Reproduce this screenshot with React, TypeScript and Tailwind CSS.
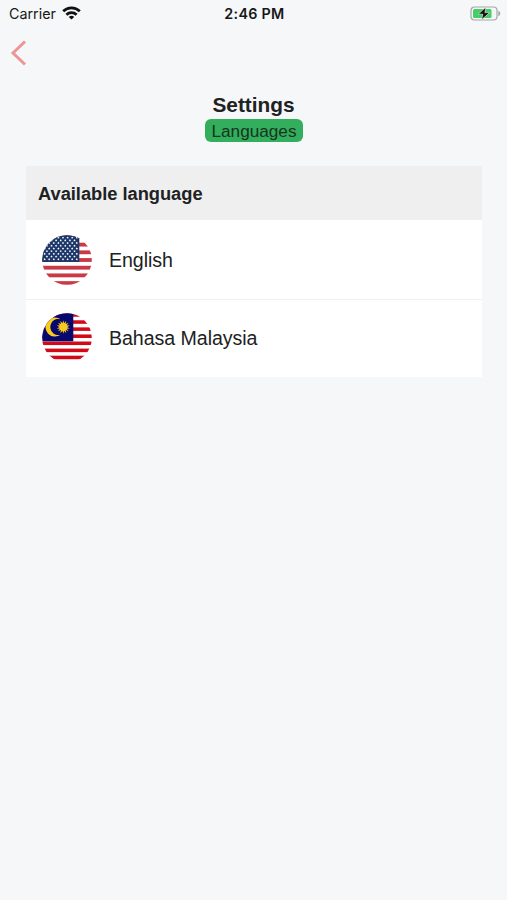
import React from 'react';

interface Language {
  id: string;
  label: string;
  flag: React.ReactNode;
}

const STRIPE = 50 / 13;

const starPoints = (cx: number, cy: number, outer: number, inner: number, count: number) =>
  Array.from({ length: count * 2 }, (_, i) => {
    const r = i % 2 === 0 ? outer : inner;
    const a = (Math.PI * i) / count - Math.PI / 2;
    return `${(cx + r * Math.cos(a)).toFixed(2)},${(cy + r * Math.sin(a)).toFixed(2)}`;
  }).join(' ');

const UsFlag = () => (
  <svg className="block h-[50px] w-[50px]" viewBox="0 0 50 50">
    <clipPath id="us-circle">
      <circle cx="25" cy="25" r="24.8" />
    </clipPath>
    <g clipPath="url(#us-circle)">
      <rect width="50" height="50" fill="#ffffff" />
      {[0, 2, 4, 6, 8, 10, 12].map(i => (
        <rect key={i} y={i * STRIPE} width="50" height={STRIPE} fill="#c93a46" />
      ))}
      <rect width="37.3" height={STRIPE * 7} fill="#1b3668" />
      {Array.from({ length: 9 }, (_, row) =>
        Array.from({ length: row % 2 === 0 ? 8 : 7 }, (_, col) => (
          <polygon
            key={`${row}-${col}`}
            points={starPoints(2.6 + col * 4.6 + (row % 2) * 2.3, 2.7 + row * 2.7, 1.25, 0.65, 5)}
            fill="#ffffff"
          />
        ))
      )}
    </g>
  </svg>
);

const MalaysiaFlag = () => (
  <svg className="mb-[2px] block h-[50px] w-[50px]" viewBox="0 0 50 50">
    <clipPath id="my-circle">
      <circle cx="25" cy="25" r="24.8" />
    </clipPath>
    <g clipPath="url(#my-circle)">
      <rect width="50" height="50" fill="#ffffff" />
      {[0, 2, 4, 6, 8, 10, 12].map(i => (
        <rect key={i} y={i * 3.54 + 0.2} width="50" height="3.54" fill="#d20a18" />
      ))}
      <rect width="31.3" height="28.3" fill="#07076e" />
      <path d="M18.6 6.2A9.6 9.6 0 1 0 18.6 21.8A8.1 8.1 0 1 1 18.6 6.2Z" fill="#f8cb1c" />
      <polygon points={starPoints(21.3, 14, 6.8, 3.8, 14)} fill="#f8cb1c" />
    </g>
  </svg>
);

const languages: Language[] = [
  { id: 'en', label: 'English', flag: <UsFlag /> },
  { id: 'ms', label: 'Bahasa Malaysia', flag: <MalaysiaFlag /> }
];

const StatusBar = () => (
  <div className="grid h-7 grid-cols-3 items-center pl-[8px] pr-[6px] font-[Inter,sans-serif] text-[#151718]">
    <div className="flex items-center gap-[6px] pl-px">
      <span className="text-[14.3px] leading-7">Carrier</span>
      <svg className="h-[14px] w-[19px] -translate-y-px" viewBox="0 0 19 14" fill="none" stroke="#111111" strokeWidth="2.7">
        <path d="M1.2 5.3C5.8 .7 13.2 .7 17.8 5.3" />
        <path d="M4.4 8.7C7.2 5.9 11.8 5.9 14.6 8.7" />
        <path d="M9.5 13.6L6.8 10.9C8.3 9.5 10.7 9.5 12.2 10.9Z" fill="#111111" stroke="none" />
      </svg>
    </div>
    <span className="text-center text-[14.3px] font-semibold leading-7 tracking-[0.3px]">2:46 PM</span>
    <svg className="h-[15px] w-[31px] -translate-y-px justify-self-end" viewBox="0 0 31 15">
      <rect x="1" y="1" width="26" height="13" rx="3.5" fill="#f5f7f9" stroke="#a4a7a8" strokeWidth="1.2" />
      <rect x="3" y="3" width="18.5" height="9" rx="1.5" fill="#45cf63" />
      <path d="M28.3 4.8V10.2C31 9.2 31 5.8 28.3 4.8Z" fill="#a4a7a8" />
      <path d="M15.8 1.2L8.2 8.2H12.8L11.6 13.8L19.6 6.6H14.9Z" fill="#111111" stroke="#f5f7f9" strokeWidth="0.6" />
    </svg>
  </div>
);

export default function App() {
  return (
    <div className="min-h-screen bg-[#f5f7f9] font-['Liberation_Sans',Arial,sans-serif] text-[#202122]">
      <StatusBar />

      {/* Back button */}
      <button className="block h-[50px] pl-[10px]" aria-label="Back">
        <svg className="h-[26px] w-[17px]" viewBox="0 0 17 26" fill="none" stroke="#ed9595" strokeWidth="3">
          <path d="M15 1.5L3 13L15 24.5" />
        </svg>
      </button>

      {/* Title */}
      <div className="flex flex-col items-center pt-[14px]">
        <h1 className="h-[27px] text-[20.8px] font-bold leading-[25px]">Settings</h1>
        <span className="ml-px h-[23px] rounded-[6px] bg-[#32ae5c] px-[6px] text-[17.2px] leading-[24px] text-[#16341f]">
          Languages
        </span>
      </div>

      {/* Language list */}
      <div className="ml-[26px] mr-[25px] mt-6 bg-white">
        <h2 className="h-[54px] bg-[#efefef] pl-3 text-[18.3px] font-bold leading-[55px] tracking-[-0.02px]">
          Available language
        </h2>
        {languages.map(language => (
          <div
            key={language.id}
            className="flex h-[79px] items-center border-t border-[#f0f1f1] pl-4 first-of-type:border-white last:h-[78px]"
          >
            {language.flag}
            <span className="ml-[17px] pt-px text-[19.6px] tracking-[-0.05px]">{language.label}</span>
          </div>
        ))}
      </div>
    </div>
  );
}
